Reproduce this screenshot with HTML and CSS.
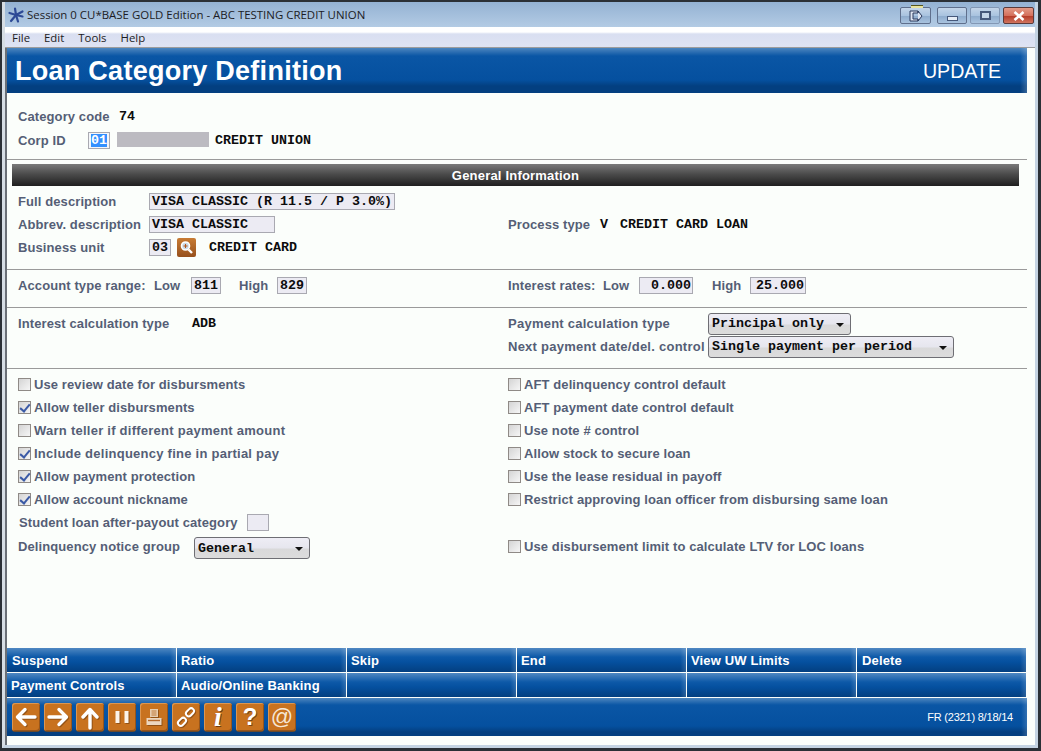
FILE: index.html
```html
<!DOCTYPE html>
<html lang="en">
<head>
<meta charset="UTF-8">
<title>Loan Category Definition</title>
<link rel="stylesheet" href="styles.css">
</head>
<body>
<div class="window">
    <div class="titlebar">
        <svg class="app-icon" width="16" height="16" viewBox="0 0 16 16">
            <g stroke="#2d4a96" stroke-width="2.2" stroke-linecap="round">
                <path d="M8 8L7 1.5"/><path d="M8 8L14.5 4.5"/><path d="M8 8L14.5 9.5"/><path d="M8 8L10 14.5"/><path d="M8 8L3 14"/><path d="M8 8L1.5 6"/>
            </g>
        </svg>
        <span class="title-text">Session 0 CU*BASE GOLD Edition - ABC TESTING CREDIT UNION</span>
        <div class="win-btns">
            <span class="win-btn wb-exit">
                <svg width="14" height="12" viewBox="0 0 14 12"><path d="M9 3V1H1V11H9V9M4 3H9V1L13 6L9 11V9H4Z" fill="#dfe6f2" stroke="#2c3a5c" stroke-width="1"/></svg>
            </span>
            <span class="win-btn wb-min"><i class="min-bar"></i></span>
            <span class="win-btn wb-max"><i class="max-box"></i></span>
            <span class="win-btn wb-close">
                <svg width="12" height="10" viewBox="0 0 12 10"><path d="M1.5 1L10.5 9M10.5 1L1.5 9" stroke="#fff" stroke-width="2.6"/></svg>
            </span>
        </div>
    </div>
    <div class="menubar">
        <span>File</span><span>Edit</span><span>Tools</span><span>Help</span>
    </div>
    <div class="page">
        <div class="header">
            <h1>Loan Category Definition</h1>
            <span class="mode">UPDATE</span>
        </div>

        <div class="section sec-top">
            <div class="row">
                <span class="lbl w-code">Category code</span>
                <span class="mono">74</span>
            </div>
            <div class="row">
                <span class="lbl w-corp">Corp ID</span>
                <span class="field f-corp"><span class="sel-text">01</span></span>
                <span class="blackout"></span>
                <span class="mono">CREDIT UNION</span>
            </div>
        </div>
        <hr class="rule">
        <div class="bar">General Information</div>

        <div class="section sec-general">
            <div class="row">
                <span class="lbl w-desc">Full description</span>
                <span class="field f-full mono">VISA CLASSIC (R 11.5 / P 3.0%)</span>
            </div>
            <div class="cols">
                <div class="row">
                    <span class="lbl w-desc">Abbrev. description</span>
                    <span class="field f-abbrev mono">VISA CLASSIC</span>
                </div>
                <div class="row">
                    <span class="lbl w-process">Process type</span>
                    <span class="mono w-v">V</span>
                    <span class="mono">CREDIT CARD LOAN</span>
                </div>
            </div>
            <div class="row">
                <span class="lbl w-desc">Business unit</span>
                <span class="field f-unit mono">03</span>
                <span class="lookup">
                    <svg width="15" height="15" viewBox="0 0 15 15"><circle cx="6.5" cy="6" r="4" fill="#c9d9e6" stroke="#fff" stroke-width="1.6"/><path d="M9.5 9.5L13 13" stroke="#fff" stroke-width="2.4"/><path d="M4.5 6H8.5M6.5 4V8" stroke="#b5561a" stroke-width="1"/></svg>
                </span>
                <span class="mono unit-name">CREDIT CARD</span>
            </div>
        </div>
        <hr class="rule">

        <div class="section sec-ranges">
            <div class="cols">
                <div class="row">
                    <span class="lbl w-range">Account type range:</span>
                    <span class="lbl w-low">Low</span>
                    <span class="field f-acct mono">811</span>
                    <span class="lbl w-high">High</span>
                    <span class="field f-acct mono">829</span>
                </div>
                <div class="row">
                    <span class="lbl w-rates">Interest rates:</span>
                    <span class="lbl w-low2">Low</span>
                    <span class="field f-low mono">0.000</span>
                    <span class="lbl w-high2">High</span>
                    <span class="field f-high mono">25.000</span>
                </div>
            </div>
        </div>
        <hr class="rule">

        <div class="section sec-calc">
            <div class="cols">
                <div class="row">
                    <span class="lbl w-calc">Interest calculation type</span>
                    <span class="mono">ADB</span>
                </div>
                <div class="row">
                    <span class="lbl wide w-pay">Payment calculation type</span>
                    <span class="dropdown d-principal mono">Principal only</span>
                </div>
            </div>
            <div class="cols">
                <div class="row"></div>
                <div class="row">
                    <span class="lbl wide w-pay">Next payment date/del. control</span>
                    <span class="dropdown d-single mono">Single payment per period</span>
                </div>
            </div>
        </div>
        <hr class="rule">

        <div class="section sec-checks">
            <div class="cols">
                <label class="row check"><i class="box"></i>Use review date for disbursments</label>
                <label class="row check"><i class="box"></i>AFT delinquency control default</label>
            </div>
            <div class="cols">
                <label class="row check"><i class="box on"></i>Allow teller disbursments</label>
                <label class="row check"><i class="box"></i>AFT payment date control default</label>
            </div>
            <div class="cols">
                <label class="row check wide"><i class="box"></i>Warn teller if different payment amount</label>
                <label class="row check"><i class="box"></i>Use note # control</label>
            </div>
            <div class="cols">
                <label class="row check wide"><i class="box on"></i>Include delinquency fine in partial pay</label>
                <label class="row check"><i class="box"></i>Allow stock to secure loan</label>
            </div>
            <div class="cols">
                <label class="row check"><i class="box on"></i>Allow payment protection</label>
                <label class="row check"><i class="box"></i>Use the lease residual in payoff</label>
            </div>
            <div class="cols">
                <label class="row check"><i class="box on"></i>Allow account nickname</label>
                <label class="row check"><i class="box"></i>Restrict approving loan officer from disbursing same loan</label>
            </div>
            <div class="row">
                <span class="lbl w-student">Student loan after-payout category</span>
                <span class="field f-student"></span>
            </div>
            <div class="cols">
                <div class="row row-notice">
                    <span class="lbl w-notice">Delinquency notice group</span>
                    <span class="dropdown d-general mono">General</span>
                </div>
                <label class="row check row-limit"><i class="box"></i>Use disbursement limit to calculate LTV for LOC loans</label>
            </div>
        </div>

        <div class="actions">
            <a>Suspend</a><a>Ratio</a><a>Skip</a><a>End</a><a>View UW Limits</a><a>Delete</a>
            <a>Payment Controls</a><a>Audio/Online Banking</a><a></a><a></a><a></a><a></a>
        </div>

        <div class="toolbar">
            <span class="tool">
                <svg width="28" height="28" viewBox="0 0 28 28"><path d="M23 14H6M13 6.5L5.5 14L13 21.5" fill="none" stroke="#fff" stroke-width="3.4" stroke-linecap="round" stroke-linejoin="round"/></svg>
            </span>
            <span class="tool">
                <svg width="28" height="28" viewBox="0 0 28 28"><path d="M5 14H22M15 6.5L22.5 14L15 21.5" fill="none" stroke="#fff" stroke-width="3.4" stroke-linecap="round" stroke-linejoin="round"/></svg>
            </span>
            <span class="tool">
                <svg width="28" height="28" viewBox="0 0 28 28"><path d="M14 25V7M7 14L14 6.5L21 14" fill="none" stroke="#fff" stroke-width="3.4" stroke-linecap="round" stroke-linejoin="round"/></svg>
            </span>
            <span class="tool">
                <svg width="14" height="12" viewBox="0 0 14 12"><rect x="0.5" y="0" width="4" height="12" fill="#fbf3ea"/><rect x="9.5" y="0" width="4" height="12" fill="#fbf3ea"/></svg>
            </span>
            <span class="tool">
                <svg width="18" height="18" viewBox="0 0 18 18"><path d="M5 1H13V9H5Z" fill="#e7cdb0"/><path d="M6.5 3H11.5M6.5 5H11.5M6.5 7H11.5" stroke="#c07a3a" stroke-width="1"/><path d="M1.5 10H16.5V17H1.5Z" fill="#ecd7c0"/><path d="M3 12.5H15" stroke="#b5692a" stroke-width="1.4"/></svg>
            </span>
            <span class="tool">
                <svg width="22" height="22" viewBox="0 0 22 22"><g fill="none" stroke="#fff" stroke-width="2"><rect x="2.5" y="13" width="9" height="5.6" rx="2.8" transform="rotate(-45 7 15.8)"/><rect x="10.5" y="3.5" width="9" height="5.6" rx="2.8" transform="rotate(-45 15 6.3)"/></g></svg>
            </span>
            <span class="tool t-i">i</span>
            <span class="tool t-q">?</span>
            <span class="tool t-at">@</span>
            <span class="stamp">FR (2321) 8/18/14</span>
        </div>
    </div>
</div>
</body>
</html>
```

FILE: styles.css
```css
* {
    padding: 0;
    margin: 0;
    box-sizing: border-box;
}

html, body {
    width: 1041px;
    height: 751px;
    overflow: hidden;
    background: #2b3036;
}

body {
    font-family: "Liberation Sans", Arial, sans-serif;
    padding: 2px 3px 3px 2px;
}

.window {
    height: 746px;
    display: flex;
    flex-direction: column;
    background: #cfdbe8;
    border-left: 3px solid #d6dde4;
    border-right: 3px solid #c4d3e2;
    border-bottom: 3px solid #c4d3e2;
}

/* title and menu */
.titlebar {
    height: 25px;
    flex: none;
    display: flex;
    align-items: center;
    padding-left: 3px;
    background: linear-gradient(#94b2d3, #b3cbe4);
    font-size: 12px;
    color: #1c1c24;
}

.app-icon {
    margin-right: 3px;
}

.title-text {
    font-family: "Open Sans", sans-serif;
    font-size: 11.45px;
}

.win-btns {
    margin-left: auto;
    margin-top: 2px;
    display: flex;
    align-items: center;
    gap: 3px;
    padding-right: 1px;
}

.win-btn {
    height: 17px;
    display: flex;
    align-items: center;
    justify-content: center;
    border: 1px solid #5f6f8c;
    border-radius: 2px;
    background: linear-gradient(#c3d5e9 0%, #a9c3df 50%, #8eaccd 55%, #a9c3df 100%);
}

.wb-exit { position: relative; width: 31px; margin-right: 3px; }
.wb-exit::before {
    content: "";
    position: absolute;
    left: 10px;
    top: -3px;
    width: 12px;
    height: 2px;
    background: #e8e4a0;
    border-top: 1px solid #55551c;
}
.wb-min { width: 30px; }
.wb-max { width: 30px; border-color: #8297b4; }
.wb-close {
    width: 31px;
    border-color: #5a3a3a;
    background: linear-gradient(#e39b88 0%, #d4705c 50%, #b53d2a 55%, #d0745f 100%);
}

.min-bar {
    display: block;
    width: 11px;
    height: 5px;
    background: #e6edf6;
    border: 1px solid #46587a;
    margin-top: 5px;
}

.max-box {
    display: block;
    width: 11px;
    height: 9px;
    border: 2px solid #46587a;
    background: #c5d5e8;
}

.menubar {
    height: 21px;
    flex: none;
    display: flex;
    align-items: center;
    padding-left: 7px;
    font-family: "Open Sans", sans-serif;
    font-size: 11.4px;
    color: #1c1c24;
    background: linear-gradient(#fff 0, #fff 5px, #d9dff1 7px, #dfe3f3 100%);
    border-bottom: 1px solid #9c9c9c;
}

.menubar span {
    margin-right: 14px;
}

.page {
    flex: 1;
    display: flex;
    flex-direction: column;
    padding-right: 8px;
    padding-bottom: 9px;
    background: #fbfefb;
    border-left: 2px solid #6a6f76;
}

/* banner */
.header {
    height: 45px;
    flex: none;
    display: flex;
    align-items: center;
    justify-content: space-between;
    padding: 1px 26px 0 8px;
    color: #fff;
    background:
        linear-gradient(to left, rgba(255,255,255,.2), rgba(255,255,255,0) 7px),
        linear-gradient(#4d86bf 0, #0a56a5 8px, #05509f 32px, #033f80 38px, #033f80 100%);
}

.header h1 {
    font-size: 27px;
    font-weight: 700;
    letter-spacing: 0.27px;
}

.mode {
    font-size: 19.6px;
}

/* form */
.section {
    padding-left: 11px;
}

.sec-top { padding-top: 11px; padding-bottom: 7px; }
.sec-general { padding-top: 4px; padding-bottom: 10px; }
.sec-ranges { padding-top: 4px; padding-bottom: 10px; }
.sec-calc { padding-top: 4px; padding-bottom: 10px; }
.sec-checks { padding-top: 4px; }

.sec-top .row { height: 24px; }

.rule {
    border: 0;
    height: 1px;
    flex: none;
    background: #9a9a9a;
}

.bar {
    height: 22px;
    flex: none;
    margin: 4px 8px 0 5px;
    display: flex;
    align-items: center;
    justify-content: center;
    color: #fff;
    font-size: 13px;
    font-weight: 700;
    letter-spacing: 0.2px;
    background: linear-gradient(#7a7a7a, #4c4c4c 45%, #1f1f1f);
}

.cols {
    display: grid;
    grid-template-columns: 490px 1fr;
}

.row {
    height: 23px;
    display: flex;
    align-items: center;
}

.lbl, .check {
    font-size: 13px;
    font-weight: 700;
    letter-spacing: 0.1px;
    color: #555e76;
    white-space: nowrap;
}

.lbl.wide, .check.wide {
    letter-spacing: 0.25px;
}

.mono {
    font-family: "Liberation Mono", "DejaVu Sans Mono", monospace;
    font-size: 13.33px;
    font-weight: 700;
    color: #0c0c0c;
    white-space: pre;
}

.w-code { width: 101px; }
.w-corp { width: 70px; }
.w-desc { width: 131px; }
.w-process { width: 92px; }
.w-v { width: 20px; }
.w-range { width: 136px; }
.w-low { width: 37px; }
.w-high { width: 38px; margin-left: 18px; }
.w-rates { width: 95px; }
.w-low2 { width: 36px; }
.w-high2 { width: 38px; margin-left: 19px; }
.w-calc { width: 174px; }
.w-pay { width: 200px; }
.w-student { width: 229px; padding-left: 1px; }
.w-notice { width: 176px; }

.field {
    height: 17px;
    display: flex;
    align-items: center;
    padding-left: 2px;
    background: #ecebf3;
    border: 1px solid #a9a9b1;
}

.f-corp { width: 22px; padding: 1px 2px; justify-content: center; background: #f4f6fa; }
.sel-text {
    display: block;
    font-family: "Liberation Mono", monospace;
    font-size: 13.33px;
    font-weight: 700;
    line-height: 13px;
    color: #fff;
    background: #3390ff;
}

.blackout {
    width: 92px;
    height: 15px;
    margin: 0 6px 2px 7px;
    background: #bcbbc1;
}

.f-full { width: 246px; }
.f-abbrev { width: 126px; }
.f-unit { width: 22px; }
.f-acct { width: 30px; }
.f-low { width: 54px; justify-content: flex-end; padding-right: 1px; }
.f-high { width: 56px; justify-content: flex-end; padding-right: 1px; }
.f-student { width: 22px; }

.lookup {
    width: 19px;
    height: 19px;
    margin-left: 6px;
    display: flex;
    align-items: center;
    justify-content: center;
    border-radius: 2px;
    background: linear-gradient(#c87c34, #96501c);
}

.unit-name { margin-left: 13px; }

.dropdown {
    position: relative;
    height: 22px;
    display: flex;
    align-items: center;
    padding-left: 3px;
    border: 1px solid #6e6e74;
    border-radius: 3px;
    background: linear-gradient(#eeedf5 0%, #e6e6ee 50%, #d9d9da 55%, #dcdcdc 100%);
}

.dropdown::after {
    content: "";
    position: absolute;
    right: 6px;
    top: 9px;
    border-left: 4px solid transparent;
    border-right: 4px solid transparent;
    border-top: 4px solid #111;
}

.d-principal { width: 143px; }
.d-single { width: 246px; }
.d-general { width: 116px; margin-top: 4px; }

.check {
    display: flex;
    align-items: center;
}

.box {
    position: relative;
    display: block;
    flex: none;
    width: 13px;
    height: 13px;
    margin-right: 3px;
    border: 1px solid #8f8a86;
    background: linear-gradient(135deg, #d4d4d4, #f6f6f6);
}

.box.on::after {
    content: "";
    position: absolute;
    left: 3px;
    top: 0;
    width: 4px;
    height: 8px;
    border-right: 2px solid #3b5aa6;
    border-bottom: 2px solid #3b5aa6;
    transform: rotate(40deg);
}

.row-notice { height: 24px; }
.row-limit { height: 24px; }

/* bottom buttons */
.actions {
    margin-top: auto;
    display: grid;
    grid-template-columns: repeat(6, 169px);
    grid-auto-rows: 24px;
    gap: 1px;
    flex: none;
}

.actions a {
    display: flex;
    align-items: center;
    padding-left: 4px;
    font-size: 13px;
    font-weight: 700;
    letter-spacing: 0.15px;
    color: #fff;
    background:
        linear-gradient(to left, rgba(255,255,255,.16), rgba(255,255,255,0) 6px),
        linear-gradient(#4f88c2 0, #0d59a8 9px, #05509f 14px, #033f80 100%);
}

.actions a:nth-child(1), .actions a:nth-child(6) {
    padding-left: 5px;
}

.toolbar {
    height: 38px;
    flex: none;
    margin-top: 1px;
    display: flex;
    align-items: center;
    gap: 4px;
    padding-left: 5px;
    background:
        linear-gradient(to left, rgba(255,255,255,.16), rgba(255,255,255,0) 6px),
        linear-gradient(#4d86bf 0, #0a56a5 7px, #05509f 28px, #033f80 34px);
}

.tool {
    width: 28px;
    height: 28px;
    display: flex;
    align-items: center;
    justify-content: center;
    border-radius: 3px;
    color: #fff;
    background: #c8721f;
    box-shadow: inset 1px 1px 0 #dc9650, inset -1px -1px 0 #96551c, 0 1px 0 #6c4a2a;
}

.tool svg {
    filter: drop-shadow(1px 1px 0 rgba(110, 60, 15, .6));
}

.t-i {
    font-family: "Liberation Serif", serif;
    font-style: italic;
    font-weight: 700;
    font-size: 28px;
    text-shadow: 1px 1px 0 rgba(70, 35, 10, .7);
}

.t-q {
    font-size: 24px;
    font-weight: 700;
    text-shadow: 1px 1px 0 rgba(70, 35, 10, .6);
}

.t-at {
    font-size: 22px;
    color: #f6e6d4;
}

.stamp {
    margin-left: auto;
    padding-right: 14px;
    font-size: 11px;
    letter-spacing: -0.2px;
    color: #fff;
}
```
